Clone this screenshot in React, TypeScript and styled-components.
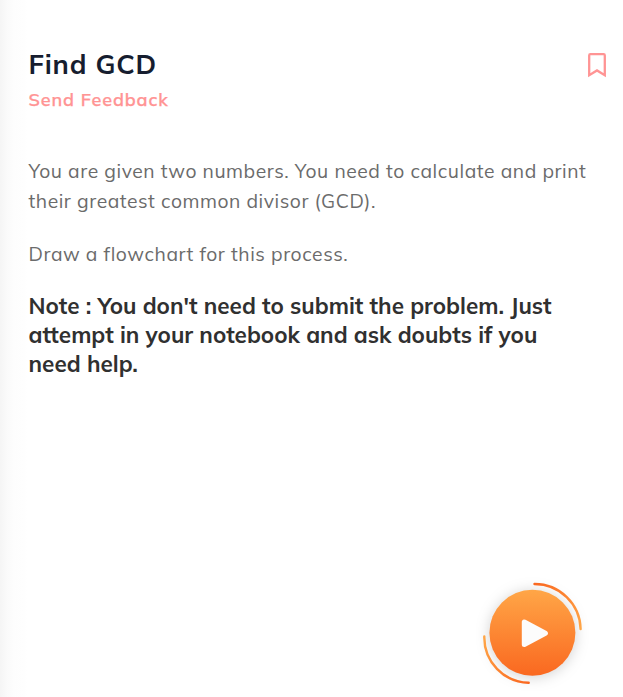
import React from "react";
import styled, { createGlobalStyle } from "styled-components";

const GlobalStyle = createGlobalStyle`
  * { box-sizing: border-box; }
  body { margin: 0; background: #fff; }
`;

const Page = styled.main`
  display: flex;
  flex-direction: column;
  width: 623px;
  height: 697px;
  padding: 47px 14px 0 28.5px;
  overflow: hidden;
  font-family: Muli, Mulish, Lato, "Open Sans", sans-serif;
  font-variant-ligatures: none;
  background: linear-gradient(90deg, #f5f5f5 0, #fafafa 7px, #fdfdfd 14px, #fefefe 24px, #fff 27px);
`;

const Header = styled.header`
  display: flex;
  justify-content: space-between;
  height: 109px;
`;

const Title = styled.h1`
  margin: 0;
  font-size: 27px;
  line-height: 34px;
  font-weight: 700;
  color: #161d2f;
`;

const Feedback = styled.a`
  display: block;
  margin-top: 7px;
  font-size: 18px;
  line-height: 24px;
  font-weight: 600;
  -webkit-text-stroke: 0.25px #ff9494;
  color: #ff9494;
`;

const BookmarkButton = styled.button`
  width: 22px;
  height: 26px;
  margin-top: 5px;
  padding: 0;
  border: 0;
  background: none;
  svg { display: block; }
`;

const Paragraph = styled.p`
  margin: 0 0 23px;
  font-size: 19.3px;
  line-height: 30px;
  color: #6b6b6b;
`;

const Note = styled.h2`
  margin: -1px 0 0;
  font-size: 22.5px;
  line-height: 29px;
  font-weight: 700;
  color: #303030;
`;

const Line = styled.span<{ $tracking: number }>`
  display: block;
  width: max-content;
  white-space: nowrap;
  letter-spacing: ${(p) => p.$tracking}px;
`;

const PlayButton = styled.button`
  width: 130px;
  height: 127px;
  margin: auto 9px 0 auto;
  padding: 0;
  border: 0;
  background: none;
  flex: none;
  svg { display: block; overflow: visible; }
`;

const Bookmark = () => (
  <svg width="22" height="26" viewBox="0 0 22 26" fill="none">
    <path d="M2.2 3.4Q2.2 2.2 3.4 2.2H16.6Q17.8 2.2 17.8 3.4V23.2L10 18.4L2.2 23.2Z" stroke="#ff9494" strokeWidth="2.3" />
  </svg>
);

const Play = () => (
  <svg width="130" height="127" viewBox="0 0 130 127" fill="none">
    <defs>
      <linearGradient id="disc" x1="0" y1="0" x2="0" y2="1">
        <stop stopColor="#ffa647" />
        <stop offset="1" stopColor="#fa6820" />
      </linearGradient>
      <linearGradient id="upper" x1="0" y1="0" x2="1" y2="1">
        <stop stopColor="#fa6820" />
        <stop offset="1" stopColor="#ffa647" />
      </linearGradient>
      <linearGradient id="lower" x1="0" y1="0" x2="1" y2="1">
        <stop stopColor="#ffa647" />
        <stop offset="1" stopColor="#fa6820" />
      </linearGradient>
      <filter id="shade" x="-50%" y="-50%" width="200%" height="200%" colorInterpolationFilters="sRGB">
        <feDropShadow dx="0" dy="1.5" stdDeviation="7" floodColor="#000" floodOpacity="0.18" />
      </filter>
    </defs>
    <circle cx="62.4" cy="62.8" r="43" fill="url(#disc)" filter="url(#shade)" />
    <path d="M64.5 14A46 46 0 0 1 110.6 59" stroke="url(#upper)" strokeWidth="2.4" strokeLinecap="round" />
    <path d="M14.3 66.5A45.5 45.5 0 0 0 58.7 112.8" stroke="url(#lower)" strokeWidth="2.4" strokeLinecap="round" />
    <path d="M54.3 52V74.6L75.4 63.3Z" fill="#fcfcfc" stroke="#fcfcfc" strokeWidth="5" strokeLinejoin="round" />
  </svg>
);

export default function App() {
  return (
    <>
      <GlobalStyle />
      <Page>
        <Header>
          <div>
            <Title><Line $tracking={0.8}>Find GCD</Line></Title>
            <Feedback><Line $tracking={0.9}>Send Feedback</Line></Feedback>
          </div>
          <BookmarkButton aria-label="Bookmark"><Bookmark /></BookmarkButton>
        </Header>
        <Paragraph>
          <Line $tracking={0.56}>You are given two numbers. You need to calculate and print</Line>
          <Line $tracking={0.56}>their greatest common divisor (GCD).</Line>
        </Paragraph>
        <Paragraph>
          <Line $tracking={0.56}>Draw a flowchart for this process.</Line>
        </Paragraph>
        <Note>
          <Line $tracking={0.01}>Note : You don't need to submit the problem. Just</Line>
          <Line $tracking={0.01}>attempt in your notebook and ask doubts if you</Line>
          <Line $tracking={0.01}>need help.</Line>
        </Note>
        <PlayButton aria-label="Play"><Play /></PlayButton>
      </Page>
    </>
  );
}
